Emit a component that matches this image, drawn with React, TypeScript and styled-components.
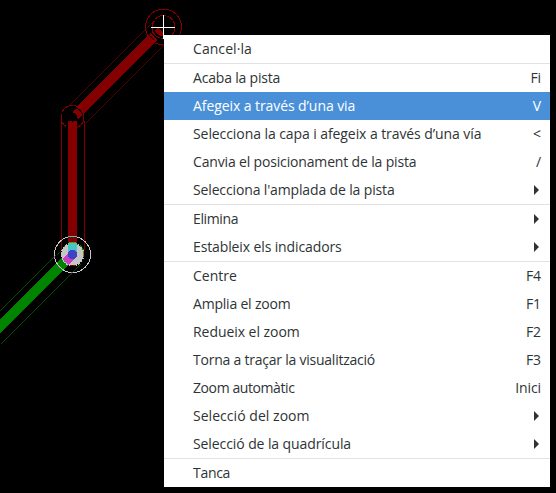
import React from 'react';
import styled, { createGlobalStyle } from 'styled-components';

const GlobalStyle = createGlobalStyle`
  body { margin: 0; background: #000; overflow: hidden; }
`;

const Editor = styled.main`
  position: relative;
  width: 556px;
  height: 493px;
  overflow: hidden;
  background: #000;
`;

const Board = styled.svg`
  display: block;
  width: 556px;
  height: 493px;
  fill: none;
  shape-rendering: crispEdges;
`;

const ContextMenu = styled.div`
  position: absolute;
  top: 35px;
  left: 164px;
  width: 386px;
  display: flex;
  flex-direction: column;
  background: #fff;
  color: #2e3436;
  font: 14px/28px 'Open Sans', 'Noto Sans', sans-serif;
  cursor: default;
`;

const Group = styled.div`
  display: flex;
  flex-direction: column;

  & + & {
    border-top: 1px solid #e2e2e2;
  }
`;

const MenuItem = styled.div<{ $active?: boolean }>`
  display: flex;
  align-items: center;
  justify-content: space-between;
  height: 28px;
  padding: 0 9px 0 29px;
  background: ${(p) => (p.$active ? '#4a90d9' : 'transparent')};
  color: ${(p) => (p.$active ? '#fff' : 'inherit')};
`;

const Label = styled.span<{ $tracking: number }>`
  letter-spacing: ${(p) => p.$tracking}px;
  white-space: nowrap;
`;

const Shortcut = styled.span`
  white-space: nowrap;
  letter-spacing: -0.1px;
`;

const Arrow = styled.svg`
  width: 5px;
  height: 10px;
  margin-right: 2px;
  fill: #2e3436;
`;

type Item = {
  label: string;
  tracking: number;
  shortcut?: string;
  submenu?: boolean;
  active?: boolean;
};

const groups: Item[][] = [
  [{ label: 'Cancel·la', tracking: 0.06 }],
  [
    { label: 'Acaba la pista', tracking: -0.19, shortcut: 'Fi' },
    { label: 'Afegeix a través d’una via', tracking: -0.08, shortcut: 'V', active: true },
    { label: 'Selecciona la capa i afegeix a través d’una vía', tracking: -0.08, shortcut: '<' },
    { label: 'Canvia el posicionament de la pista', tracking: -0.16, shortcut: '/' },
    { label: "Selecciona l'amplada de la pista", tracking: -0.14, submenu: true },
  ],
  [
    { label: 'Elimina', tracking: -0.38, submenu: true },
    { label: 'Estableix els indicadors', tracking: -0.12, submenu: true },
  ],
  [
    { label: 'Centre', tracking: 0.02, shortcut: 'F4' },
    { label: 'Amplia el zoom', tracking: -0.2, shortcut: 'F1' },
    { label: 'Redueix el zoom', tracking: -0.05, shortcut: 'F2' },
    { label: 'Torna a traçar la visualització', tracking: -0.23, shortcut: 'F3' },
    { label: 'Zoom automàtic', tracking: -0.41, shortcut: 'Inici' },
    { label: 'Selecció del zoom', tracking: 0.04, submenu: true },
    { label: 'Selecció de la quadrícula', tracking: -0.09, submenu: true },
  ],
  [{ label: 'Tanca', tracking: -0.3 }],
];

const RED = '#840000';
const GREEN = '#008400';

function Tracks() {
  return (
    <Board viewBox="0 0 556 493" aria-hidden="true">
      {/* back-layer track */}
      <g stroke={GREEN}>
        <path d="M-6 332.5 L72 254.5" strokeWidth="9.2" />
        <path d="M-0.5 311.5 L61.5 249.5 M-0.5 344.5 L80.5 263.5" strokeWidth="0.6" />
      </g>

      {/* front-layer tracks */}
      <g stroke={RED}>
        <path d="M72.5 121 V254" strokeWidth="9" />
        <path d="M61.5 121 V250 M84.5 121 V250" />
        <path d="M79 111.5 L154 36.5" strokeWidth="9.4" />
        <path d="M69.5 104.5 L153.5 20.5 M85.5 122.5 L163.5 44.5" strokeWidth="0.6" />
      </g>

      {/* corner joint */}
      <path d="M72 112 L77 107 L84 114 L78 119 Z" fill={RED} />
      <circle cx="72.5" cy="117" r="4.6" fill="#000" />
      <path d="M75.5 107.5 Q81.5 110 83.5 116.5" stroke="#000" />
      <circle cx="72.5" cy="117" r="11.5" stroke={RED} strokeDasharray="13 1 9 2 14 2" />

      {/* track end and its clearance */}
      <path d="M148.5 34.5 L154.5 40.5 M151.5 32 L157.5 38" stroke="#000" />
      <circle cx="163.5" cy="27" r="18" stroke={RED} />
      <circle cx="163.5" cy="27" r="11.5" stroke={RED} strokeDasharray="12 1 7 2" />
      <path d="M153.5 34 Q150.5 27 154.5 21" stroke={RED} />
      <path d="M157 29 L163 35 M157 30 Q158 34 163 34" stroke={RED} strokeWidth="4" />

      {/* via */}
      <circle cx="72.5" cy="254.5" r="11" fill="#c6c6c6" />
      <circle cx="72.5" cy="254.5" r="11.5" stroke="#c6c6c6" strokeDasharray="2 1.3" />
      <path d="M64 247 L67 244 M76.5 243.5 L82 247 L84 252" stroke={GREEN} strokeDasharray="2 2" />
      <path d="M69 242.5 H76 M83.5 251 V257 M64 261.5 H67" stroke="#848400" />
      <path d="M65.5 262 L72 255.5" stroke="#c642c6" strokeWidth="8" />
      <path d="M72.5 243 V254" stroke="#42c6c6" strokeWidth="9" />
      <circle cx="72.5" cy="254.5" r="4.6" fill="#4242c6" />
      <circle cx="72.5" cy="254.5" r="18" stroke="#c6c6c6" />
      <path d="M68 236.5 H77" stroke="#42c6c6" />
      <path d="M54.5 256 V258 M58 266 L60 268 M71 272.5 H73" stroke="#c642c6" />
      <path d="M70 265.5 H76" stroke={RED} />

      {/* crosshair */}
      <path d="M151 27.5 H175 M163.5 15 V39" stroke="#fff" />
    </Board>
  );
}

export default function App() {
  return (
    <>
      <GlobalStyle />
      <Editor>
        <Tracks />
        <ContextMenu role="menu">
          {groups.map((items) => (
            <Group key={items[0].label}>
              {items.map((item) => (
                <MenuItem key={item.label} role="menuitem" $active={item.active}>
                  <Label $tracking={item.tracking}>{item.label}</Label>
                  {item.shortcut && <Shortcut>{item.shortcut}</Shortcut>}
                  {item.submenu && (
                    <Arrow viewBox="0 0 5 10" aria-hidden="true">
                      <path d="M0 0 L5 5 L0 10 Z" />
                    </Arrow>
                  )}
                </MenuItem>
              ))}
            </Group>
          ))}
        </ContextMenu>
      </Editor>
    </>
  );
}
